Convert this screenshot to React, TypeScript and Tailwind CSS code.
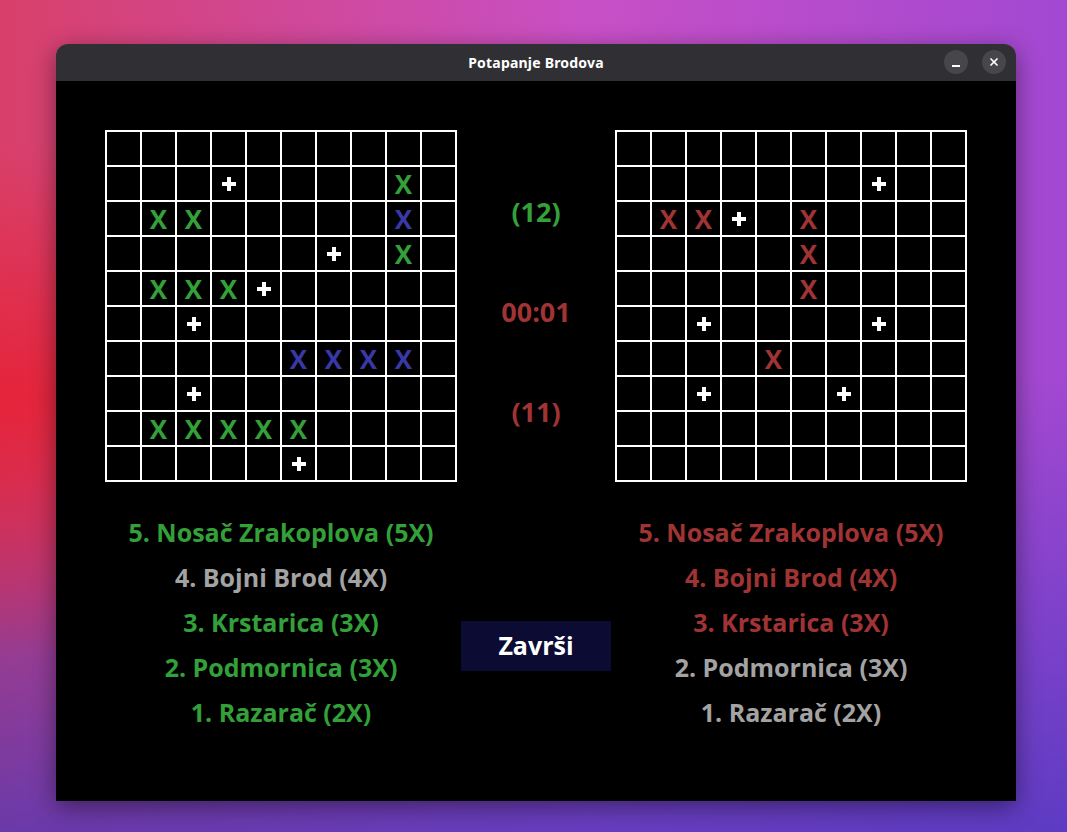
import { X } from 'lucide-react';

const GREEN = 'text-[#33a03a]';
const RED = 'text-[#a03434]';
const BLUE = 'text-[#3838a6]';
const GREY = 'text-[#a3a3a3]';

// tabla igraca (lijevo) i protivnika (desno)
const leftBoard = [
  '..........',
  '...+....g.',
  '.gg.....b.',
  '......+.g.',
  '.ggg+.....',
  '..+.......',
  '.....bbbb.',
  '..+.......',
  '.ggggg....',
  '.....+....',
];

const rightBoard = [
  '..........',
  '.......+..',
  '.rr+.r....',
  '.....r....',
  '.....r....',
  '..+....+..',
  '....r.....',
  '..+...+...',
  '..........',
  '..........',
];

const leftShips = [
  { label: '5. Nosač Zrakoplova (5X)', color: GREEN },
  { label: '4. Bojni Brod (4X)', color: GREY },
  { label: '3. Krstarica (3X)', color: GREEN },
  { label: '2. Podmornica (3X)', color: GREEN },
  { label: '1. Razarač (2X)', color: GREEN },
];

const rightShips = [
  { label: '5. Nosač Zrakoplova (5X)', color: RED },
  { label: '4. Bojni Brod (4X)', color: RED },
  { label: '3. Krstarica (3X)', color: RED },
  { label: '2. Podmornica (3X)', color: GREY },
  { label: '1. Razarač (2X)', color: GREY },
];

function Cell({ mark }: { mark: string }) {
  const xColor = mark === 'g' ? GREEN : mark === 'b' ? BLUE : RED;
  return (
    <div className="w-[33px] h-[33px] bg-black flex items-center justify-center">
      {mark === '+' && (
        <svg width="14" height="14" viewBox="0 0 14 14">
          <rect x="5" y="0" width="4" height="14" fill="#fff" />
          <rect x="0" y="5" width="14" height="4" fill="#fff" />
        </svg>
      )}
      {mark !== '+' && mark !== '.' && (
        <span className={`text-[26px] font-bold leading-none ${xColor}`}>X</span>
      )}
    </div>
  );
}

function Board({ rows }: { rows: string[] }) {
  return (
    <div className="w-[352px] h-[352px] bg-white p-[2px] grid grid-cols-10 gap-[2px]">
      {rows.map((row, r) =>
        row.split('').map((mark, c) => <Cell key={`${r}-${c}`} mark={mark} />),
      )}
    </div>
  );
}

function ShipList({ ships }: { ships: { label: string; color: string }[] }) {
  return (
    <div className="w-[352px] flex flex-col">
      {ships.map((s) => (
        <div key={s.label} className={`h-[45px] flex items-center justify-center text-[25px] font-bold ${s.color}`}>
          {s.label}
        </div>
      ))}
    </div>
  );
}

export default function App() {
  return (
    <div
      className="w-full h-[832px] overflow-hidden pt-[44px] pl-[56px] bg-[radial-gradient(ellipse_at_0%_48%,#e5243a_0%,rgba(229,36,58,0)_42%),linear-gradient(to_bottom,rgba(60,50,190,0)_45%,rgba(70,55,190,0.75)_100%),linear-gradient(to_right,#d8406a_0%,#c850c6_55%,#a248d2_100%)]"
      style={{ fontFamily: '"Open Sans", "Noto Sans", sans-serif' }}
    >
      <div className="w-[960px] rounded-t-[12px] overflow-hidden shadow-[0_6px_24px_rgba(0,0,0,0.45)]">
        {/* naslovna traka */}
        <div className="h-[37px] bg-[#303034] flex items-center relative">
          <div className="flex-1 text-center text-white text-[14px] font-bold tracking-[0.2px]" style={{ fontFamily: '"Noto Sans", sans-serif' }}>
            Potapanje Brodova
          </div>
          <div className="absolute right-[10px] top-[6px] flex gap-[14px]">
            <div className="w-[24px] h-[24px] rounded-full bg-[#46464b] flex items-end justify-center pb-[7px]">
              <div className="w-[8px] h-[2px] bg-white" />
            </div>
            <div className="w-[24px] h-[24px] rounded-full bg-[#46464b] flex items-center justify-center">
              <X size={12} strokeWidth={3.5} color="#fff" />
            </div>
          </div>
        </div>

        {/* sadrzaj */}
        <div className="h-[720px] bg-black">
          <div className="flex pt-[49px] pl-[49px]">
            <Board rows={leftBoard} />
            <div className="w-[158px] flex flex-col items-center pt-[57px] gap-[50px]">
              <div className={`h-[50px] flex items-center text-[27px] font-bold ${GREEN}`}>(12)</div>
              <div className={`h-[50px] flex items-center text-[27px] font-bold ${RED}`}>00:01</div>
              <div className={`h-[50px] flex items-center text-[27px] font-bold ${RED}`}>(11)</div>
            </div>
            <Board rows={rightBoard} />
          </div>

          <div className="flex pl-[49px] mt-[28px]">
            <ShipList ships={leftShips} />
            <div className="w-[158px] flex justify-center">
              <button className="mt-[111px] w-[150px] h-[50px] bg-[#0b0b33] text-white text-[25px] font-bold flex items-center justify-center">
                Završi
              </button>
            </div>
            <ShipList ships={rightShips} />
          </div>
        </div>
      </div>
    </div>
  );
}
